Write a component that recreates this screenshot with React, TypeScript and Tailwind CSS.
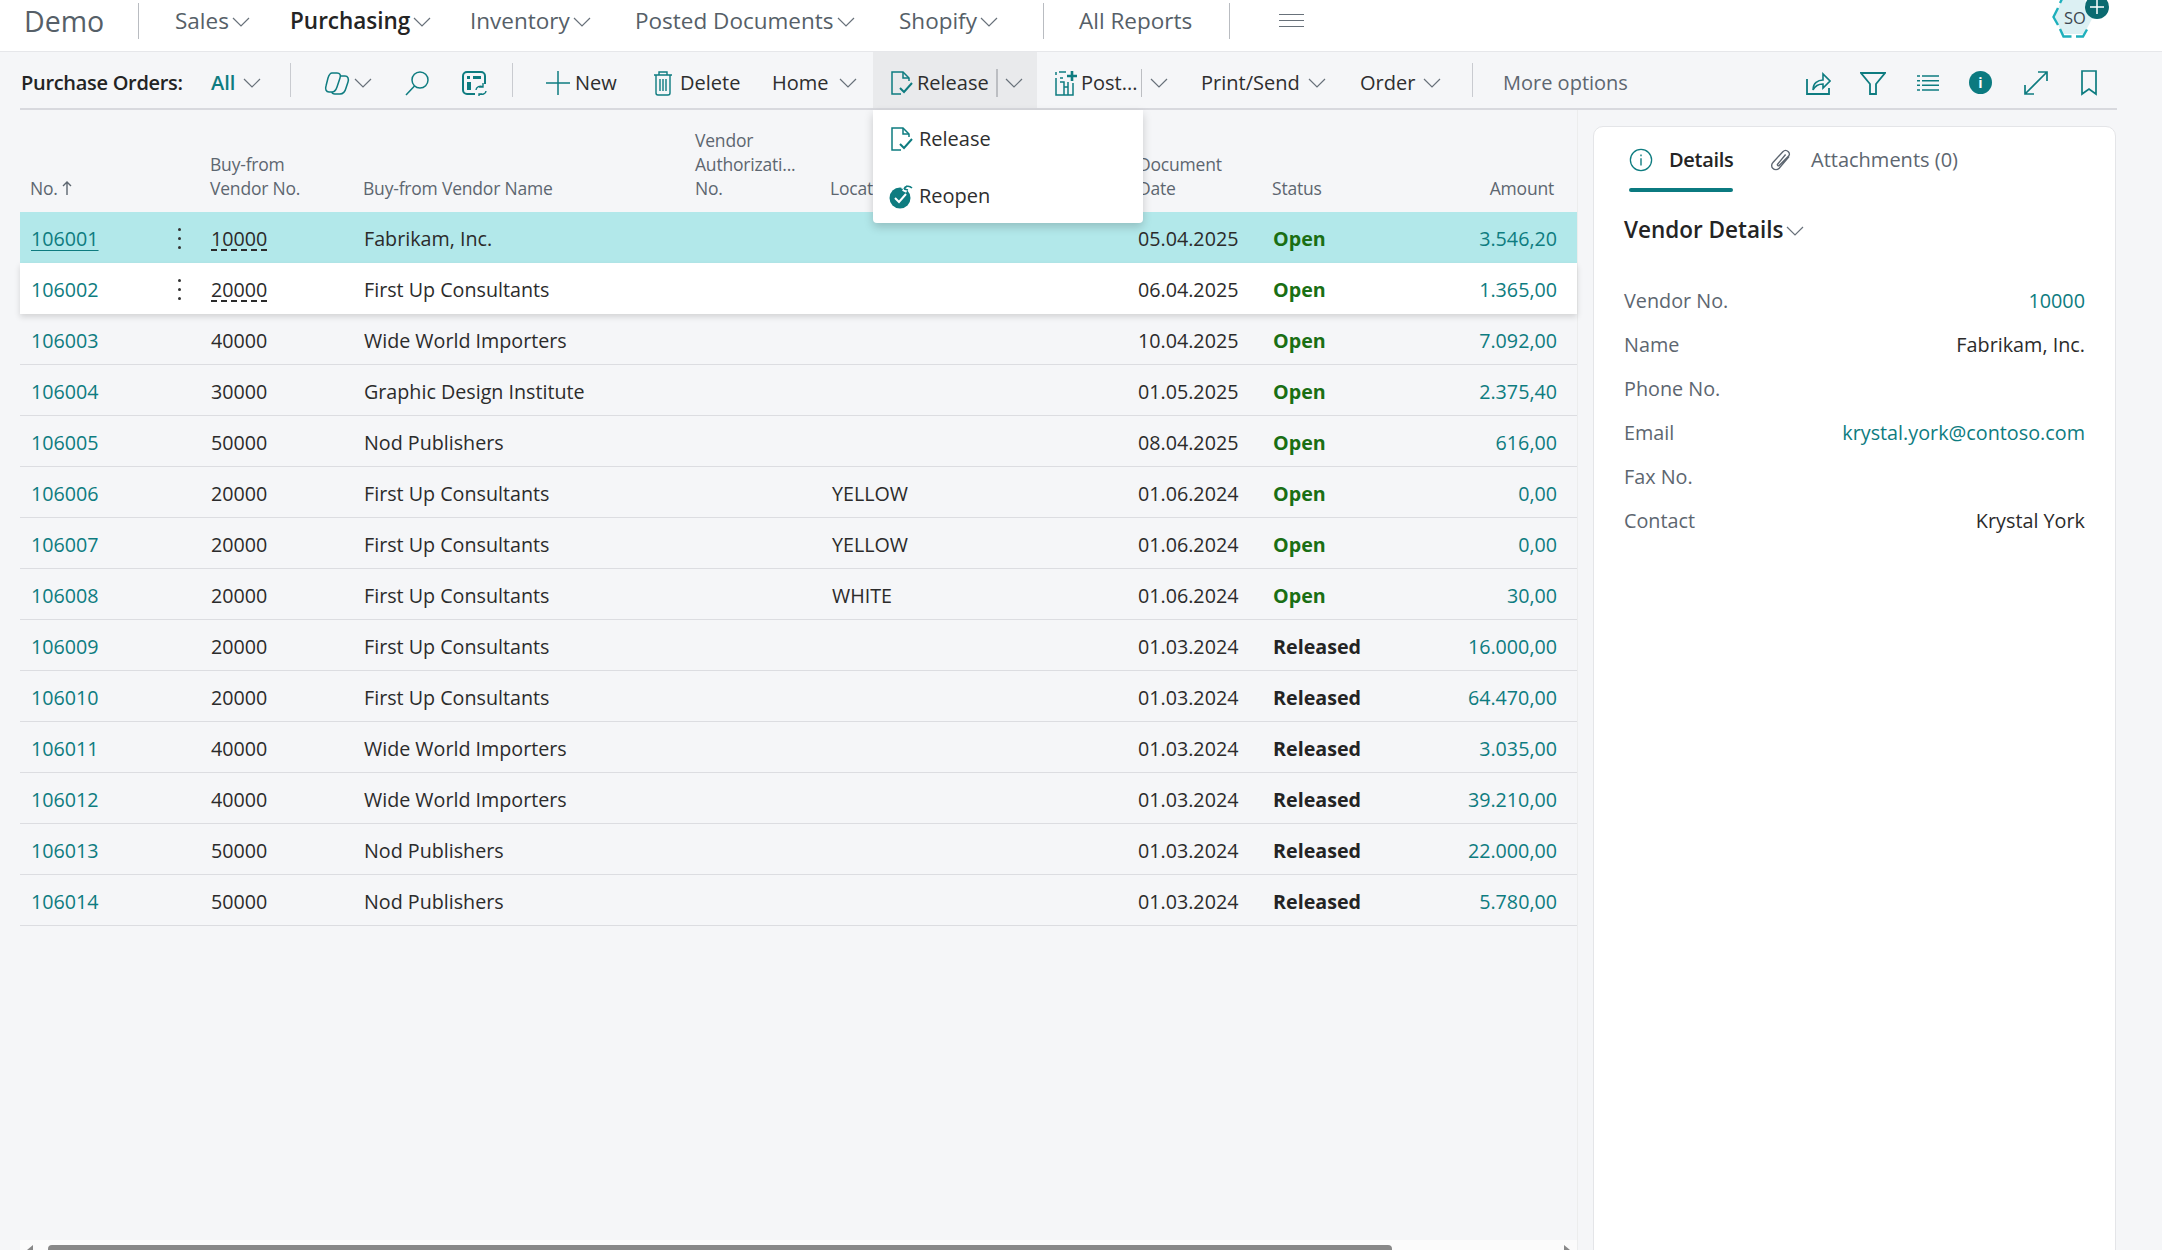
import React from "react";

const teal = "#0e7c80";

const rows = [
  ["106001", "10000", "Fabrikam, Inc.", "", "05.04.2025", "Open", "3.546,20"],
  ["106002", "20000", "First Up Consultants", "", "06.04.2025", "Open", "1.365,00"],
  ["106003", "40000", "Wide World Importers", "", "10.04.2025", "Open", "7.092,00"],
  ["106004", "30000", "Graphic Design Institute", "", "01.05.2025", "Open", "2.375,40"],
  ["106005", "50000", "Nod Publishers", "", "08.04.2025", "Open", "616,00"],
  ["106006", "20000", "First Up Consultants", "YELLOW", "01.06.2024", "Open", "0,00"],
  ["106007", "20000", "First Up Consultants", "YELLOW", "01.06.2024", "Open", "0,00"],
  ["106008", "20000", "First Up Consultants", "WHITE", "01.06.2024", "Open", "30,00"],
  ["106009", "20000", "First Up Consultants", "", "01.03.2024", "Released", "16.000,00"],
  ["106010", "20000", "First Up Consultants", "", "01.03.2024", "Released", "64.470,00"],
  ["106011", "40000", "Wide World Importers", "", "01.03.2024", "Released", "3.035,00"],
  ["106012", "40000", "Wide World Importers", "", "01.03.2024", "Released", "39.210,00"],
  ["106013", "50000", "Nod Publishers", "", "01.03.2024", "Released", "22.000,00"],
  ["106014", "50000", "Nod Publishers", "", "01.03.2024", "Released", "5.780,00"],
];

const fields = [
  ["Vendor No.", "10000", true],
  ["Name", "Fabrikam, Inc.", false],
  ["Phone No.", "", false],
  ["Email", "krystal.york@contoso.com", true],
  ["Fax No.", "", false],
  ["Contact", "Krystal York", false],
] as const;

const cols = "grid grid-cols-[149px_20px_173px_331px_136px_307px_135px_149px_157px]";

function Chevron({ className = "" }: { className?: string }) {
  return (
    <svg viewBox="0 0 18 10" className={`w-[18px] h-[10px] shrink-0 ${className}`} fill="none" stroke="#68717a" strokeWidth="1.2">
      <path d="M1 1l8 8 8-8" />
    </svg>
  );
}

function Icon({ children, className = "w-[26px] h-[26px]", box = "0 0 26 26" }: { children: React.ReactNode; className?: string; box?: string }) {
  return (
    <svg viewBox={box} className={`shrink-0 ${className}`} fill="none" stroke={teal} strokeWidth="1.5">
      {children}
    </svg>
  );
}

const ReleaseIcon = () => (
  <Icon>
    <path d="M21 11V8l-6-6H4v22h9" />
    <path d="M15 2v6h6" />
    <path d="M12 18l4 4 8-9" strokeWidth="2" />
  </Icon>
);

const ReopenIcon = () => (
  <Icon>
    <circle cx="12" cy="15" r="10.5" fill={teal} stroke="none" />
    <path d="M7 15l4 4 7-8" stroke="#fff" strokeWidth="2" />
    <path d="M15 6c1-3 5-4 8-2M15 6l4-3M15 6l4 2" stroke="#fff" strokeWidth="4" />
    <path d="M16 6c1-3 5-4 8-1M16 6l3-3M16 6l4 1" strokeWidth="1.6" />
  </Icon>
);

function NavItem({ label, className, active }: { label: string; className: string; active?: boolean }) {
  return (
    <div className={`flex items-center gap-[3px] ${className}`}>
      <span className={active ? "text-[22.5px] font-semibold text-[#242424]" : "text-[22.5px] text-[#565f68]"}>{label}</span>
      <Chevron className="mt-[2px]" />
    </div>
  );
}

function ToolText({ children, className = "" }: { children: React.ReactNode; className?: string }) {
  return <span className={`text-[20px] text-[#2e2e2e] ${className}`}>{children}</span>;
}

function Sep() {
  return <div className="mb-[5px] h-[34px] w-px shrink-0 bg-[#c9cbd0]" />;
}

export default function App() {
  return (
    <div className="relative h-screen overflow-hidden bg-[#f5f6f8] font-['Open_Sans',sans-serif]">
      {/* top nav */}
      <div className="relative flex h-[52px] items-center bg-white border-b border-[#e6e7ea] pb-[9px]">
        <span className="ml-[24px] w-[114px] text-[28.5px] text-[#565f68]">Demo</span>
        <div className="w-px h-[36px] bg-[#b9bcc1]" />
        <NavItem label="Sales" className="ml-[36px] w-[115px]" />
        <NavItem label="Purchasing" active className="w-[180px]" />
        <NavItem label="Inventory" className="w-[165px]" />
        <NavItem label="Posted Documents" className="w-[264px]" />
        <NavItem label="Shopify" className="w-[144px]" />
        <div className="w-px h-[36px] bg-[#b9bcc1]" />
        <span className="ml-[35px] w-[150px] text-[22.5px] text-[#565f68]">All Reports</span>
        <div className="w-px h-[36px] bg-[#b9bcc1]" />
        <div className="ml-[49px] flex flex-col gap-[5px] w-[25px] mb-[2px]">
          <div className="h-px bg-[#68717a]" />
          <div className="h-px bg-[#68717a]" />
          <div className="h-px bg-[#68717a]" />
        </div>
        {/* avatar */}
        <div className="absolute left-[2049px] top-0 h-[40px] w-[62px]">
          <svg viewBox="0 0 62 40" className="h-[40px] w-[62px]" fill="none" stroke="#1fb0bc" strokeWidth="2.4">
            <path d="M13 -2h22l9 19-9 17H13L6 17z" fill="#dcf0f3" stroke="none" />
            <path d="M9 8L4.5 17 9 25" />
            <path d="M11 29l3.5 7.5h8" />
            <path d="M27 36.5h7l4-7" />
            <path d="M11 3l2-4" />
            <circle cx="48" cy="7" r="12" fill="#0b6a70" stroke="none" />
            <path d="M48 0v14M41 7h14" stroke="#fff" strokeWidth="1.5" />
          </svg>
          <span className="absolute left-[15px] top-[8px] text-[16.5px] leading-[20px] text-[#3c4650]">SO</span>
        </div>
      </div>

      {/* action bar */}
      <div className="ml-[20px] flex h-[58px] w-[2097px] items-center border-b-2 border-[#d8d9de] pt-[5px]">
        <span className="ml-px w-[190px] text-[20px] font-semibold tracking-[-0.3px] text-[#242424]">Purchase Orders:</span>
        <div className="flex w-[79px] items-center gap-[8px]">
          <span className="text-[20px] font-semibold text-[#0e7c80]">All</span>
          <Chevron />
        </div>
        <Sep />
        <div className="ml-[33px] flex w-[80px] items-center gap-[4px]">
          <Icon>
            <path d="M8 3h5c3 0 4 2 3 5l-3 9c-1 3-3 5-5 5H5c-3 0-4-3-3-6l2-8c1-3 2-5 4-5z" />
            <path d="M16 6h5c3 0 4 3 3 6l-2 6c-1 4-3 6-6 6h-5c-2 0-3-1-3-2" />
          </Icon>
          <Chevron />
        </div>
        <div className="flex w-[57px] items-center">
          <Icon>
            <circle cx="16" cy="10" r="8" />
            <path d="M10.5 16L2 25" />
          </Icon>
        </div>
        <div className="flex w-[51px] items-center">
          <Icon>
            <path d="M14 24H6a4 4 0 0 1-4-4V6a4 4 0 0 1 4-4h14a4 4 0 0 1 4 4v8" strokeWidth="2" />
            <path d="M6 6h3v3H6zM12 6h8v3h-8zM6 12h4v8H6z" fill={teal} stroke="none" />
            <path d="M15 20c0-3 4-5 7-3M25 21c0 3-4 4-7 3M22 13v4h-4M18 27v-3h3" strokeWidth="1.4" />
          </Icon>
        </div>
        <Sep />
        <div className="ml-[32px] flex w-[107px] items-center gap-[4px]">
          <Icon>
            <path d="M13 1v24M1 13h24" />
          </Icon>
          <ToolText>New</ToolText>
        </div>
        <div className="flex w-[120px] items-center gap-[6px]">
          <Icon className="w-[22px] h-[26px]" box="0 0 22 26">
            <path d="M2 5h18M7 5V2h8v3M4 5v18c0 1 1 2 2 2h10c1 0 2-1 2-2V5M8 9v12M11 9v12M14 9v12" strokeWidth="1.4" />
          </Icon>
          <ToolText>Delete</ToolText>
        </div>
        <div className="flex w-[101px] items-center gap-[10px]">
          <ToolText>Home</ToolText>
          <Chevron />
        </div>
        <div className="-mt-[5px] flex h-[calc(100%+5px)] w-[164px] items-center bg-[#e9eaec] pl-[15px] pt-[5px]">
          <ReleaseIcon />
          <ToolText className="ml-[3px]">Release</ToolText>
          <div className="ml-[7px] h-[28px] w-[2px] bg-[#bcbec2]" />
          <Chevron className="ml-[7px]" />
        </div>
        <div className="ml-[16px] flex w-[130px] items-center">
          <Icon>
            <path d="M3 8v17h17V13M3 2v3M6 2h7M7 8h3M7 12h4v13M15 12v13M11 17h4" />
            <path d="M19 1v10M14 6h10" strokeWidth="2.6" />
          </Icon>
          <ToolText className="ml-[2px]">Post...</ToolText>
          <div className="ml-[4px] h-[28px] w-px bg-[#bcbec2]" />
          <Chevron className="ml-[8px]" />
        </div>
        <div className="ml-[18px] flex w-[159px] items-center gap-[8px]">
          <ToolText>Print/Send</ToolText>
          <Chevron />
        </div>
        <div className="flex w-[112px] items-center gap-[8px]">
          <ToolText>Order</ToolText>
          <Chevron />
        </div>
        <Sep />
        <span className="ml-[30px] w-[302px] text-[20px] text-[#5d6670]">More options</span>
        <div className="flex w-[55px] items-center">
          <Icon>
            <path d="M2 9v15h22v-6" strokeWidth="1.8" />
            <path d="M8 20c0-7 5-10 10-10V4l7 7-7 7v-4c-4 0-8 2-10 6z" strokeWidth="1.6" />
          </Icon>
        </div>
        <div className="flex w-[55px] items-center">
          <Icon>
            <path d="M1 3h24l-9 11v10h-6V14z" strokeWidth="1.8" />
          </Icon>
        </div>
        <div className="flex w-[54px] items-center">
          <Icon>
            <path d="M2 6h3M7 6h17M2 10.7h3M7 10.7h17M2 15.3h3M7 15.3h17M2 20h3M7 20h17" strokeWidth="1.5" />
          </Icon>
        </div>
        <div className="flex w-[54px] items-center">
          <div className="flex h-[23px] w-[23px] items-center justify-center rounded-full bg-[#0b7a80] text-[14px] font-bold text-white">i</div>
        </div>
        <div className="flex w-[56px] items-center">
          <Icon>
            <path d="M2 24L24 2M15 2h9v9M2 15v9h9" strokeWidth="1.7" />
          </Icon>
        </div>
        <Icon className="ml-px w-[18px] h-[26px]" box="0 0 18 26">
          <path d="M2 1h14v23l-7-5-7 5z" strokeWidth="1.7" />
        </Icon>
      </div>

      <div className="flex">
        {/* table */}
        <div className="relative ml-[20px] h-[1140px] w-[1558px] border-r border-[#eceded]">
          <div className={`${cols} mt-[14px] h-[88px] items-end pb-[12px] text-[17.5px] leading-[24px] tracking-[-0.2px] text-[#5d6670]`}>
            <div className="flex items-center gap-[4px] pl-[10px]">
              No.
              <svg viewBox="0 0 10 14" className="h-[14px] w-[10px]" fill="none" stroke="#5d6670" strokeWidth="1.4">
                <path d="M5 14V1M1 5l4-4 4 4" />
              </svg>
            </div>
            <div />
            <div className="pl-[21px]">Buy-from<br />Vendor No.</div>
            <div className="pl-px">Buy-from Vendor Name</div>
            <div className="pl-[2px]">Vendor<br />Authorizati...<br />No.</div>
            <div className="pl-px">Location</div>
            <div className="pl-[2px]">Document<br />Date</div>
            <div className="pl-px">Status</div>
            <div className="pr-[23px] text-right">Amount</div>
          </div>
          {rows.map((r, i) => (
            <div
              key={r[0]}
              className={`${cols} h-[51px] items-center text-[19.7px] text-[#2b2b2b] ${
                i === 0 ? "bg-[#b2e8ea] pt-[2px]" : i === 1 ? "bg-white pt-[2px] shadow-[0_3px_6px_rgba(0,0,0,0.14)] relative" : "border-b border-[#dcdde1] pt-[3px]"
              }`}
            >
              <span className={`pl-[11px] text-[#0e7c80] ${i === 0 ? "underline underline-offset-4" : ""}`}>{r[0]}</span>
              <div className="flex flex-col items-center gap-[6px]">
                {i < 2 && (
                  <>
                    <div className="h-[3px] w-[3px] rounded-full bg-[#333]" />
                    <div className="h-[3px] w-[3px] rounded-full bg-[#333]" />
                    <div className="h-[3px] w-[3px] rounded-full bg-[#333]" />
                  </>
                )}
              </div>
              <span className="pl-[22px]">
                <span className={i < 2 ? "underline decoration-dashed underline-offset-4" : ""}>{r[1]}</span>
              </span>
              <span className="pl-[2px]">{r[2]}</span>
              <span />
              <span className="pl-[3px]">{r[3]}</span>
              <span className="pl-[2px]">{r[4]}</span>
              <span className={`pl-[2px] font-bold ${r[5] === "Open" ? "text-[#1a6f14]" : "text-[#242424]"}`}>{r[5]}</span>
              <span className="pr-[20px] text-right text-[#0e7c80]">{r[6]}</span>
            </div>
          ))}
          {/* scrollbar */}
          <div className="absolute bottom-0 left-0 flex h-[10px] w-full items-end justify-between bg-[#fbfbfb] px-[7px]">
            <div className="h-[5px] w-[6px] bg-[#888] [clip-path:polygon(100%_0,100%_100%,0_100%)]" />
            <div className="absolute bottom-0 left-[28px] h-[5px] w-[1344px] rounded-t-[4px] bg-[#888]" />
            <div className="h-[5px] w-[6px] bg-[#888] [clip-path:polygon(0_0,100%_100%,0_100%)]" />
          </div>
        </div>

        {/* factbox */}
        <div className="ml-[15px] mt-[16px] h-[1200px] w-[523px] rounded-t-[10px] border border-[#e4e5e8] bg-white pl-[35px] pr-[30px]">
          <div className="flex h-[76px] items-start">
            <div className="flex h-[76px] w-[104px] flex-col">
              <div className="mt-[18px] flex items-center gap-[16px]">
                <Icon className="h-[24px] w-[24px]">
                  <circle cx="13" cy="13" r="11.5" strokeWidth="1.4" />
                  <path d="M13 11v8M13 7v2" strokeWidth="1.5" />
                </Icon>
                <span className="text-[20px] font-semibold tracking-[-0.3px] text-[#242424]">Details</span>
              </div>
              <div className="mt-[13px] h-[4px] rounded-full bg-[#0b7a80]" />
            </div>
            <div className="ml-[37px] mt-[18px] flex items-center gap-[19px]">
              <svg viewBox="0 0 24 24" className="h-[24px] w-[22px]" fill="none" stroke="#5d6670" strokeWidth="1.5">
                <path d="M21 8L10 21c-2 2-5 2-7 0s-1-5 0-6L14 3c2-2 4-2 6 0s1 4 0 5L10 18c-1 1-2 0-2-1l9-11" />
              </svg>
              <span className="text-[20px] text-[#5d6670]">Attachments (0)</span>
            </div>
          </div>
          <div className="-ml-[5px] mt-[10px] flex items-center gap-[3px]">
            <span className="text-[22.5px] font-semibold text-[#242424]">Vendor Details</span>
            <Chevron className="mt-[2px]" />
          </div>
          <div className="-ml-[5px] mt-[32px] flex flex-col">
            {fields.map(([k, v, link]) => (
              <div key={k} className="flex h-[44px] items-center justify-between text-[19.8px]">
                <span className="text-[#5d6670]">{k}</span>
                <span className={link ? "text-[#0e7c80]" : "text-[#2b2b2b]"}>{v}</span>
              </div>
            ))}
          </div>
        </div>
      </div>

      {/* release dropdown */}
      <div className="absolute left-[873px] top-[110px] flex h-[113px] w-[270px] flex-col justify-center rounded-b-[4px] bg-white pl-[15px] shadow-[0_4px_10px_rgba(0,0,0,0.18)]">
        <div className="flex h-[57px] items-center gap-[5px] pt-[2px]">
          <ReleaseIcon />
          <ToolText>Release</ToolText>
        </div>
        <div className="flex h-[57px] items-center gap-[5px] pt-[2px]">
          <ReopenIcon />
          <ToolText>Reopen</ToolText>
        </div>
      </div>
    </div>
  );
}
